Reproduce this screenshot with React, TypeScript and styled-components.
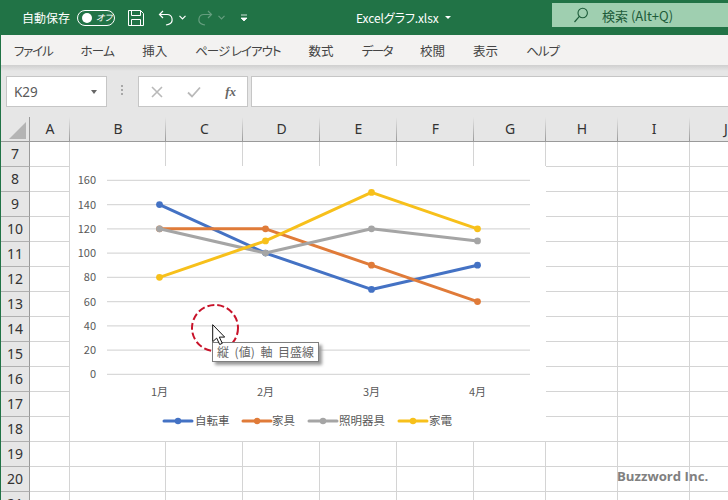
import React from "react";
import styled, { createGlobalStyle } from "styled-components";

const JP = `"Noto Sans CJK JP", "Noto Sans", sans-serif`;

const MENU = [
  { label: "ファイル", tight: 1.2 },
  { label: "ホーム", tight: 0.7 },
  { label: "挿入", tight: 0 },
  { label: "ページ レイアウト", tight: 1 },
  { label: "数式", tight: 0 },
  { label: "データ", tight: 1.5 },
  { label: "校閲", tight: 0 },
  { label: "表示", tight: 0 },
  { label: "ヘルプ", tight: 1 },
];
const COLS = [
  { name: "A", width: 40 },
  { name: "B", width: 96 },
  { name: "C", width: 77 },
  { name: "D", width: 77 },
  { name: "E", width: 77 },
  { name: "F", width: 77 },
  { name: "G", width: 72 },
  { name: "H", width: 72 },
  { name: "I", width: 72 },
  { name: "J", width: 72 },
];
const ROWS = [7, 8, 9, 10, 11, 12, 13, 14, 15, 16, 17, 18, 19, 20, 21];

const SERIES = [
  { name: "自転車", color: "#4472c4", values: [140, 100, 70, 90], lx: 94, tx: 125 },
  { name: "家具", color: "#e07b39", values: [120, 120, 90, 60], lx: 173, tx: 202 },
  { name: "照明器具", color: "#a5a5a5", values: [120, 100, 120, 110], lx: 239, tx: 269 },
  { name: "家電", color: "#f7c01b", values: [80, 110, 150, 120], lx: 329, tx: 359 },
];
const CAT_X = [89.5, 195.5, 301.5, 407.5];
const MONTHS = ["1月", "2月", "3月", "4月"];
const TICKS = [0, 20, 40, 60, 80, 100, 120, 140, 160];
const valueY = (v: number) => 208.3 - v * 1.2125;

const Chart = () => (
  <ChartBox viewBox="0 0 476 275">
    {TICKS.map((t) => (
      <g key={t}>
        <line x1="37" x2="460" y1={valueY(t)} y2={valueY(t)} stroke="#d9d9d9" strokeWidth="1.2" />
        <text x="26" y={valueY(t) + 4} textAnchor="end" fontSize="11" fill="#595959">
          {t}
        </text>
      </g>
    ))}
    {MONTHS.map((m, i) => (
      <text key={m} x={CAT_X[i]} y={230} textAnchor="middle" fontSize="11" fill="#595959">
        {m}
      </text>
    ))}
    {SERIES.map((s) => (
      <g key={s.name}>
        <polyline
          points={s.values.map((v, i) => `${CAT_X[i]},${valueY(v)}`).join(" ")}
          fill="none"
          stroke={s.color}
          strokeWidth="3"
          strokeLinecap="round"
          strokeLinejoin="round"
        />
        {s.values.map((v, i) => (
          <circle key={i} cx={CAT_X[i]} cy={valueY(v)} r="3.4" fill={s.color} />
        ))}
        <line x1={s.lx} x2={s.lx + 28} y1="255" y2="255" stroke={s.color} strokeWidth="3" strokeLinecap="round" />
        <circle cx={s.lx + 14} cy="255" r="3.2" fill={s.color} />
        <text x={s.tx} y="259" fontSize="11.5" fill="#595959">
          {s.name}
        </text>
      </g>
    ))}
  </ChartBox>
);

export default function App() {
  return (
    <>
      <GlobalStyle />
      <Page>
        <TitleBar>
          <AutoSave>自動保存</AutoSave>
          <Toggle>
            <ToggleDot />
            <ToggleText>オフ</ToggleText>
          </Toggle>
          <QuickIcon $left={13} width="16" height="16" viewBox="0 0 16 16">
            <path d="M.5.5h12l3 3v12H.5z M3.5.5v5h9v-5 M3.5 15.5v-6h9v6" fill="none" stroke="#fff" strokeWidth="1" />
          </QuickIcon>
          <QuickIcon $left={14} width="16" height="16" viewBox="0 0 16 16">
            <path d="M5 1 1.5 4.5 5 8M1.5 4.5H9a5 5 0 0 1 1.5 9.8L8 15" fill="none" stroke="#fff" strokeWidth="1.2" />
          </QuickIcon>
          <Chevron $left={5} width="7" height="5" viewBox="0 0 7 5">
            <path d="M.5.8 3.5 3.8 6.5.8" fill="none" stroke="#fff" strokeWidth="1.2" />
          </Chevron>
          <QuickIcon $left={11} $dim width="16" height="16" viewBox="0 0 16 16">
            <path d="M11 1l3.5 3.5L11 8M14.5 4.5H7a5 5 0 0 0-1.5 9.8L8 15" fill="none" stroke="#fff" strokeWidth="1.2" />
          </QuickIcon>
          <Chevron $left={5} $dim width="7" height="5" viewBox="0 0 7 5">
            <path d="M.5.8 3.5 3.8 6.5.8" fill="none" stroke="#fff" strokeWidth="1.2" />
          </Chevron>
          <QuickIcon $left={15} width="8" height="8" viewBox="0 0 8 8">
            <path d="M1 1h6M1 4h6L4 7z" fill="#fff" stroke="#fff" strokeWidth="0.8" />
          </QuickIcon>
          <FileName>
            Excelグラフ.xlsx
            <Caret />
          </FileName>
          <SearchBox>
            <svg width="16" height="16" viewBox="0 0 16 16">
              <circle cx="9.7" cy="6" r="4.7" fill="none" stroke="#1d5c3a" strokeWidth="1.1" />
              <path d="M6.4 9.4 1.5 15" fill="none" stroke="#1d5c3a" strokeWidth="1.2" />
            </svg>
            <SearchText>検索 (Alt+Q)</SearchText>
          </SearchBox>
        </TitleBar>

        <Workspace>
          <MenuBar>
            {MENU.map((m) => (
              <MenuItem key={m.label} $tight={m.tight}>
                {m.label}
              </MenuItem>
            ))}
          </MenuBar>

          <FormulaRow>
            <NameBox>
              K29
              <NameCaret />
            </NameBox>
            <Grip />
            <FormulaButtons>
              <svg width="12" height="12" viewBox="0 0 12 12">
                <path d="M1 1l10 10M11 1 1 11" stroke="#b9b9b9" strokeWidth="1.6" />
              </svg>
              <svg width="14" height="12" viewBox="0 0 14 12">
                <path d="M1 6.5 5 10.5 13 1.5" fill="none" stroke="#b9b9b9" strokeWidth="1.8" />
              </svg>
              <FxLabel>fx</FxLabel>
            </FormulaButtons>
            <FormulaInput />
          </FormulaRow>

          <Sheet>
            <ColumnHeader>
              <Corner>
                <CornerMark />
              </Corner>
              {COLS.map((c) => (
                <ColumnCell key={c.name} $width={c.width}>
                  {c.name}
                </ColumnCell>
              ))}
            </ColumnHeader>
            {ROWS.map((r) => (
              <GridRow key={r}>
                <RowHead>{r}</RowHead>
                {COLS.map((c) => (
                  <Cell key={c.name} $width={c.width} />
                ))}
              </GridRow>
            ))}

            <Chart />

            <HoverMark width="50" height="50" viewBox="0 0 50 50">
              <circle cx="25" cy="25" r="23" fill="none" stroke="#c8132a" strokeWidth="2" strokeDasharray="7 3" />
            </HoverMark>
            <Tip>縦 (値) 軸 目盛線</Tip>
            <Pointer width="13" height="22" viewBox="0 0 13 22">
              <path d="M.7.7v17l4-3.6 3 6.4 2.6-1.2-3-6.2h5.4z" fill="#fff" stroke="#111" strokeWidth="1" />
            </Pointer>
            <Watermark>Buzzword Inc.</Watermark>
          </Sheet>
        </Workspace>
      </Page>
    </>
  );
}

const GlobalStyle = createGlobalStyle`
  html, body {
    margin: 0;
    padding: 0;
    background: #fff;
  }
  body {
    font-family: ${JP};
    overflow: hidden;
  }
`;

const Page = styled.div`
  width: 728px;
  height: 500px;
  overflow: hidden;
  display: flex;
  flex-direction: column;
`;

const TitleBar = styled.div`
  height: 35px;
  flex: none;
  background: #217346;
  display: flex;
  align-items: center;
  color: #fff;
`;

const AutoSave = styled.span`
  margin-left: 22px;
  font-size: 12px;
  white-space: nowrap;
  font-feature-settings: "palt";
`;

const Toggle = styled.div`
  position: relative;
  margin-left: 7px;
  width: 36px;
  height: 14px;
  border: 1px solid #fff;
  border-radius: 9px;
  flex: none;
`;

const ToggleDot = styled.span`
  position: absolute;
  left: 4px;
  top: 2px;
  width: 10px;
  height: 10px;
  border-radius: 50%;
  background: #fff;
`;

const ToggleText = styled.span`
  position: absolute;
  left: 18px;
  top: 0;
  font-size: 9px;
  line-height: 14px;
  font-style: italic;
  font-feature-settings: "palt";
`;

const QuickIcon = styled.svg<{ $left: number; $dim?: boolean }>`
  margin-left: ${(p) => p.$left}px;
  flex: none;
  opacity: ${(p) => (p.$dim ? 0.3 : 1)};
`;

const Chevron = styled.svg<{ $left: number; $dim?: boolean }>`
  margin-left: ${(p) => p.$left}px;
  flex: none;
  opacity: ${(p) => (p.$dim ? 0.3 : 1)};
`;

const FileName = styled.div`
  position: absolute;
  left: 356px;
  top: 9px;
  font-size: 12px;
  line-height: 17px;
  white-space: nowrap;
  font-feature-settings: "palt";
  letter-spacing: -0.1px;
  display: flex;
  align-items: center;
`;

const Caret = styled.span`
  margin-left: 6px;
  border-left: 3px solid transparent;
  border-right: 3px solid transparent;
  border-top: 3px solid #fff;
`;

const SearchBox = styled.div`
  margin-left: auto;
  width: 176px;
  height: 24px;
  margin-top: -5px;
  box-sizing: border-box;
  padding-left: 21px;
  background: #9fcfb0;
  display: flex;
  align-items: center;
  gap: 13px;
`;

const SearchText = styled.span`
  font-size: 13px;
  color: #1d5c3a;
  font-feature-settings: "palt";
  white-space: nowrap;
`;

const Workspace = styled.div`
  flex: 1;
  min-height: 0;
  border-left: 1px solid #217346;
  display: flex;
  flex-direction: column;
`;

const MenuBar = styled.div`
  height: 30px;
  flex: none;
  background: #f3f2f1;
  display: flex;
  align-items: center;
  gap: 28px;
  padding-left: 13px;
`;

const MenuItem = styled.span<{ $tight: number }>`
  font-size: 12.5px;
  color: #444;
  white-space: nowrap;
  font-feature-settings: "palt";
  letter-spacing: ${(p) => -p.$tight}px;
`;

const FormulaRow = styled.div`
  height: 52px;
  flex: none;
  box-sizing: border-box;
  padding-top: 11px;
  padding-bottom: 10px;
  background: linear-gradient(#cfcfcf, #e6e6e6 6px);
  display: flex;
  align-items: stretch;
`;

const NameBox = styled.div`
  margin-left: 5px;
  width: 101px;
  box-sizing: border-box;
  background: #fff;
  border: 1px solid #c6c6c6;
  padding: 0 9px 0 7px;
  display: flex;
  align-items: center;
  justify-content: space-between;
  font-family: "Noto Sans", sans-serif;
  font-size: 13.5px;
  color: #5a5a5a;
`;

const NameCaret = styled.span`
  border-left: 3.5px solid transparent;
  border-right: 3.5px solid transparent;
  border-top: 4px solid #666;
`;

const Grip = styled.div`
  width: 2px;
  height: 10px;
  margin: 9px 15px 0 14px;
  background: repeating-linear-gradient(#a8a8a8 0 2px, transparent 2px 4px);
`;

const FormulaButtons = styled.div`
  width: 110px;
  box-sizing: border-box;
  background: #fff;
  border: 1px solid #c6c6c6;
  padding: 0 11px 0 12px;
  display: flex;
  align-items: center;
  justify-content: space-between;
`;

const FxLabel = styled.span`
  font-family: "Liberation Serif", serif;
  font-style: italic;
  font-weight: 700;
  font-size: 13px;
  color: #666;
`;

const FormulaInput = styled.div`
  flex: 1;
  margin-left: 3px;
  background: #fff;
  border: 1px solid #c6c6c6;
  border-right: none;
`;

const Sheet = styled.div`
  position: relative;
  flex: 1;
  min-height: 0;
  overflow: hidden;
  background: #fff;
`;

const ColumnHeader = styled.div`
  height: 25px;
  box-sizing: border-box;
  background: #e6e6e6;
  border-bottom: 1px solid #9a9a9a;
  display: flex;
`;

const Corner = styled.div`
  width: 29px;
  flex: none;
  box-sizing: border-box;
  border-right: 1px solid #9a9a9a;
  padding: 5px 0 0 8px;
`;

const CornerMark = styled.div`
  width: 17px;
  height: 17px;
  background: #b4b4b4;
  clip-path: polygon(100% 0, 100% 100%, 0 100%);
`;

const ColumnCell = styled.div<{ $width: number }>`
  width: ${(p) => p.$width}px;
  flex: none;
  box-sizing: border-box;
  padding-bottom: 2px;
  display: flex;
  align-items: center;
  justify-content: center;
  font-family: "Noto Sans", sans-serif;
  font-size: 14px;
  color: #333;
  background: linear-gradient(#e6e6e6, #9a9a9a) right / 1px 100% no-repeat;
`;

const GridRow = styled.div`
  height: 25px;
  display: flex;
`;

const RowHead = styled.div`
  width: 29px;
  flex: none;
  box-sizing: border-box;
  padding-bottom: 2px;
  background: #e6e6e6;
  border-right: 1px solid #9a9a9a;
  border-bottom: 1px solid #b0b0b0;
  display: flex;
  align-items: center;
  justify-content: center;
  font-family: "Noto Sans", sans-serif;
  font-size: 14px;
  color: #333;
`;

const Cell = styled.div<{ $width: number }>`
  width: ${(p) => p.$width}px;
  flex: none;
  box-sizing: border-box;
  border-right: 1px solid #d4d4d4;
  border-bottom: 1px solid #d4d4d4;
`;

const ChartBox = styled.svg`
  position: absolute;
  left: 69px;
  top: 49px;
  width: 476px;
  height: 275px;
  background: #fff;
  font-family: ${JP};
`;

const HoverMark = styled.svg`
  position: absolute;
  left: 189px;
  top: 186px;
`;

const Tip = styled.div`
  position: absolute;
  left: 211px;
  top: 225px;
  width: 107px;
  height: 20px;
  box-sizing: border-box;
  background: #fff;
  border: 1px solid #7f7f7f;
  box-shadow: 3px 3px 3px #9a9a9a;
  font-size: 12px;
  line-height: 18px;
  color: #666;
  text-align: center;
  white-space: nowrap;
  word-spacing: 3px;
`;

const Pointer = styled.svg`
  position: absolute;
  left: 211px;
  top: 207px;
`;

const Watermark = styled.div`
  position: absolute;
  left: 616px;
  top: 349px;
  font-family: "Open Sans", sans-serif;
  font-weight: 700;
  font-size: 13.2px;
  line-height: 20px;
  color: #808080;
  white-space: nowrap;
`;
